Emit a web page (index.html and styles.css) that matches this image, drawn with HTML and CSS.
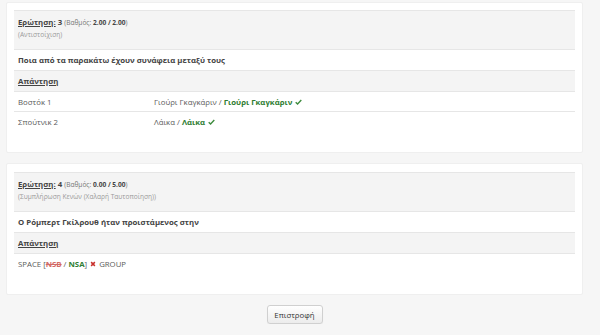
FILE: index.html
```html
<!DOCTYPE html>
<html>
<head>
<meta charset="utf-8">
<link rel="stylesheet" href="styles.css">
</head>
<body>
<div class="page">
  <div class="panel">
    <table class="qtable">
      <tr class="head">
        <td colspan="2">
          <div class="title"><span class="label">Ερώτηση:</span> 3 <span class="grade">(Βαθμός: <b>2.00 / 2.00</b>)</span></div>
          <div class="type">(Αντιστοίχιση)</div>
        </td>
      </tr>
      <tr><td colspan="2" class="qtext">Ποια από τα παρακάτω έχουν συνάφεια μεταξύ τους</td></tr>
      <tr class="ans"><td colspan="2"><span class="label">Απάντηση</span></td></tr>
      <tr class="row">
        <td class="c1">Βοστόκ 1</td>
        <td>Γιούρι Γκαγκάριν / <b class="ok">Γιούρι Γκαγκάριν</b> <svg class="chk" viewBox="0 0 10 8"><path d="M1 4.2 L3.7 6.8 L9 1.3" fill="none" stroke="#3d8b3d" stroke-width="2"/></svg></td>
      </tr>
      <tr class="row">
        <td class="c1">Σπούτνικ 2</td>
        <td>Λάικα / <b class="ok">Λάικα</b> <svg class="chk" viewBox="0 0 10 8"><path d="M1 4.2 L3.7 6.8 L9 1.3" fill="none" stroke="#3d8b3d" stroke-width="2"/></svg></td>
      </tr>
    </table>
  </div>

  <div class="panel">
    <table class="qtable">
      <tr class="head">
        <td colspan="2">
          <div class="title"><span class="label">Ερώτηση:</span> 4 <span class="grade">(Βαθμός: <b>0.00 / 5.00</b>)</span></div>
          <div class="type">(Συμπλήρωση Κενών (Χαλαρή Ταυτοποίηση))</div>
        </td>
      </tr>
      <tr><td colspan="2" class="qtext">Ο Ρόμπερτ Γκίλρουθ ήταν προιστάμενος στην</td></tr>
      <tr class="ans"><td colspan="2"><span class="label">Απάντηση</span></td></tr>
      <tr class="row">
        <td colspan="2">SPACE [<b class="wrong">NSB</b> / <b class="ok">NSA</b>] <svg class="cross" viewBox="0 0 8 8"><path d="M1.5 1.5 L6.5 6.5 M6.5 1.5 L1.5 6.5" fill="none" stroke="#c9302c" stroke-width="2"/></svg> GROUP</td>
      </tr>
    </table>
  </div>

  <div class="actions">
    <button class="btn">Επιστροφή</button>
  </div>
</div>
</body>
</html>
```

FILE: styles.css
```css
html, body {
  margin: 0;
  padding: 0;
  background: #f6f6f6;
  font-family: "Open Sans", "Noto Sans", sans-serif;
  font-size: 7.8px;
  color: #5a5a5a;
}
.page {
  width: 577px;
  margin-left: 6px;
  padding-top: 2px;
}
.panel {
  background: #fff;
  border: 1px solid #efefef;
  border-radius: 2px;
  padding: 7px 7px 21px 7px;
  margin-bottom: 10px;
}
.panel + .panel {
  padding-top: 8px;
}
.qtable {
  width: 100%;
  border-collapse: collapse;
}
.qtable td {
  border-top: 1px solid #e6e6e6;
  padding: 4px 4px;
  line-height: 12px;
  vertical-align: top;
}
.qtable tr.row td {
  padding: 4px 4px 3px 4px;
}
.head td {
  background: #f4f4f4;
  padding: 5px 4px 8px 4px;
}
.title {
  font-weight: 700;
  color: #444;
}
.label {
  text-decoration: underline;
  font-weight: 700;
  color: #444;
}
.grade {
  font-weight: 400;
  font-size: 6.6px;
  color: #777;
}
.grade b {
  color: #444;
}
.type {
  font-size: 6.6px;
  color: #9a9a9a;
}
.qtext {
  font-weight: 700;
  color: #444;
}
.ans td {
  background: #f4f4f4;
}
.c1 {
  width: 128px;
}
.ok {
  color: #2e7d32;
  font-weight: 700;
}
.wrong {
  color: #d36a66;
  font-weight: 700;
  text-decoration: line-through;
}
.chk {
  width: 7px;
  height: 6px;
  margin-left: 1px;
}
.cross {
  width: 6px;
  height: 6px;
  margin: 0 1px;
}
.actions {
  display: flex;
  justify-content: center;
}
.btn {
  font-family: "Open Sans", "Noto Sans", sans-serif;
  font-size: 7.8px;
  color: #333;
  background: linear-gradient(#ffffff, #ececec);
  border: 1px solid #d0d0d0;
  border-radius: 3px;
  width: 56px;
  height: 19px;
  padding: 0;
  box-shadow: 0 1px 1px rgba(0,0,0,0.05);
}
```
